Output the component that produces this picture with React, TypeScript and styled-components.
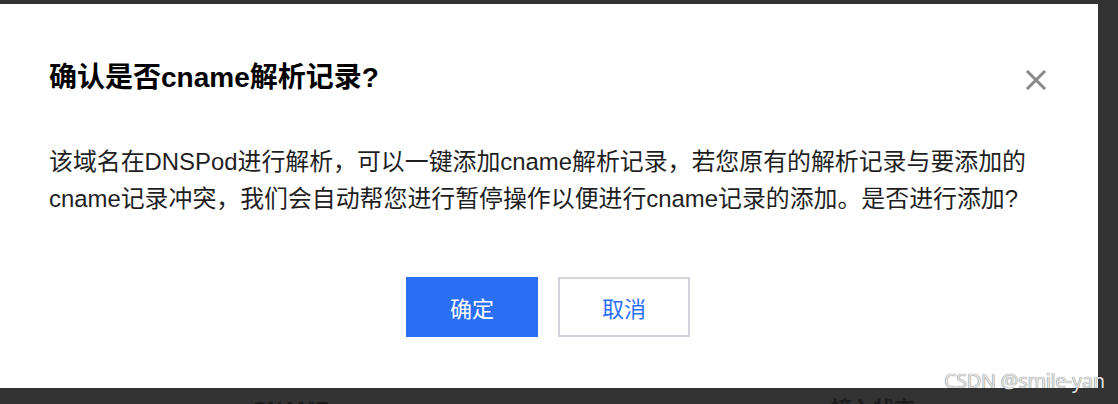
import React from "react";
import styled, { createGlobalStyle } from "styled-components";

const GlobalStyle = createGlobalStyle`
  html, body {
    margin: 0;
    padding: 0;
    background: #333333;
  }
  body {
    font-family: "Liberation Sans", "Noto Sans CJK SC", sans-serif;
  }
`;

const Page = styled.div`
  position: relative;
  width: 1118px;
  height: 404px;
  overflow: hidden;
  background: #333333;
  padding-top: 4px;
  box-sizing: border-box;
`;

const Dialog = styled.div`
  width: 1098px;
  height: 384px;
  background: #ffffff;
  box-sizing: border-box;
  padding: 56px 51px 50px 49px;
  display: flex;
  flex-direction: column;
`;

const Header = styled.div`
  display: flex;
  align-items: center;
  justify-content: space-between;
  height: 36px;
`;

const Title = styled.h2`
  margin: 0;
  font-size: 28px;
  line-height: 36px;
  font-weight: 700;
  color: #000000;
  font-family: "Liberation Sans", "Noto Sans CJK SC", sans-serif;
`;

const CloseButton = styled.button`
  border: none;
  background: transparent;
  padding: 0;
  margin-top: 4px;
  width: 22px;
  height: 22px;
  display: flex;
  align-items: center;
  justify-content: center;
  cursor: pointer;
`;

const Body = styled.p`
  margin: 47px 0 0 0;
  font-size: 23.9px;
  line-height: 37px;
  color: #1f1f1f;
  font-family: "Liberation Sans", "Noto Sans CJK SC", sans-serif;
  white-space: nowrap;
`;

const Footer = styled.div`
  margin-top: 60px;
  display: flex;
  justify-content: center;
  gap: 20px;
`;

const Button = styled.button<{ $primary?: boolean }>`
  width: 132px;
  height: 60px;
  box-sizing: border-box;
  font-size: 22px;
  font-family: "Noto Sans CJK SC", sans-serif;
  border: 2px solid ${(p) => (p.$primary ? "#2b6ff6" : "#d2d5dd")};
  background: ${(p) => (p.$primary ? "#2b6ff6" : "#ffffff")};
  color: ${(p) => (p.$primary ? "#ffffff" : "#2b6ff6")};
  display: flex;
  align-items: center;
  justify-content: center;
  padding: 0;
  cursor: pointer;
`;

const Behind = styled.div`
  height: 16px;
  display: flex;
  align-items: flex-start;
`;

const BehindText = styled.span<{ $left: number }>`
  margin-left: ${(p) => p.$left}px;
  margin-top: 10px;
  font-size: 21px;
  line-height: 21px;
  font-weight: 700;
  color: #1c1c1c;
  font-family: "Liberation Sans", "Noto Sans CJK SC", sans-serif;
`;

const Watermark = styled.div`
  position: absolute;
  left: 944px;
  top: 368px;
  font-size: 20px;
  line-height: 26px;
  color: #e2e2e2;
  font-family: "Noto Sans", "DejaVu Sans", sans-serif;
  letter-spacing: -0.4px;
  text-shadow: 0 0 1px rgba(0, 0, 0, 0.7);
`;

const CloseIcon = () => (
  <svg width="22" height="22" viewBox="0 0 22 22">
    <path d="M2 2 L20 20 M20 2 L2 20" stroke="#888888" strokeWidth="3" strokeLinecap="butt" />
  </svg>
);

export default function App() {
  return (
    <>
      <GlobalStyle />
      <Page>
        <Dialog>
          <Header>
            <Title>确认是否cname解析记录?</Title>
            <CloseButton aria-label="关闭">
              <CloseIcon />
            </CloseButton>
          </Header>
          <Body>
            该域名在DNSPod进行解析，可以一键添加cname解析记录，若您原有的解析记录与要添加的
            <br />
            cname记录冲突，我们会自动帮您进行暂停操作以便进行cname记录的添加。是否进行添加?
          </Body>
          <Footer>
            <Button $primary>确定</Button>
            <Button>取消</Button>
          </Footer>
        </Dialog>
        <Behind>
          <BehindText $left={252}>CNAME</BehindText>
          <BehindText $left={502}>接入状态</BehindText>
        </Behind>
        <Watermark>CSDN @smile-yan</Watermark>
      </Page>
    </>
  );
}
